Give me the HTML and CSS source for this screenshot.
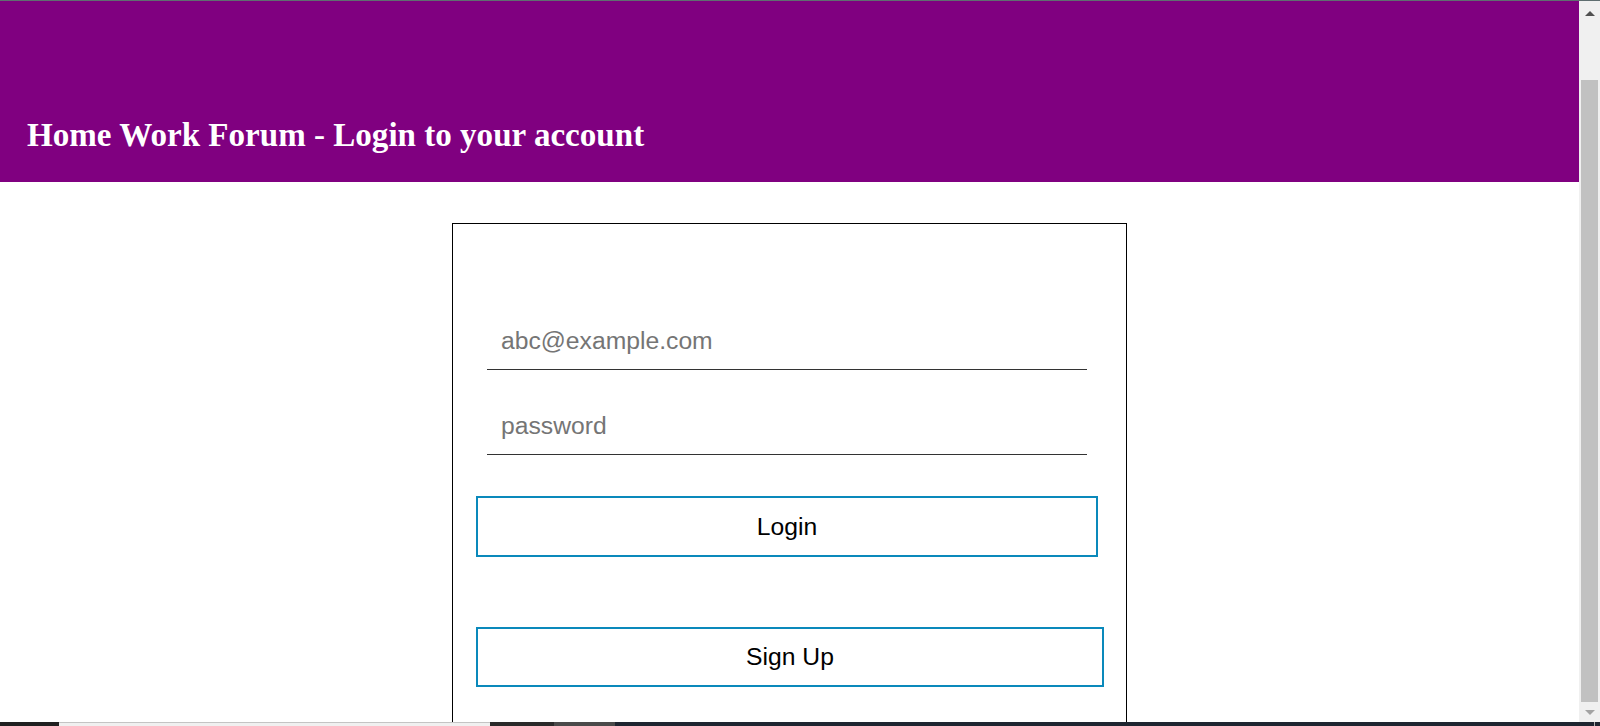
FILE: index.html
```html
<!DOCTYPE html>
<html lang="en">
<head>
<meta charset="utf-8">
<title>Home Work Forum - Login</title>
<link rel="stylesheet" href="styles.css">
</head>
<body>
<div class="screen">
  <div class="viewport">
    <div class="page">
      <header class="site-header">
        <h1 class="site-title">Home Work Forum - Login to your account</h1>
      </header>
      <main class="main">
        <div class="card">
          <form class="login-form">
            <input class="field" type="email" placeholder="abc@example.com">
            <input class="field field-pass" type="password" placeholder="password">
            <button class="btn btn-login" type="button">Login</button>
            <button class="btn btn-signup" type="button">Sign Up</button>
          </form>
        </div>
      </main>
    </div>
    <div class="scrollbar">
      <div class="sb-btn"><span class="arrow-up"></span></div>
      <div class="sb-thumb"></div>
      <div class="sb-btn sb-btn-bottom"><span class="arrow-down"></span></div>
    </div>
  </div>
  <div class="taskbar">
    <span class="tb tb-a"></span>
    <span class="tb tb-b"></span>
    <span class="tb tb-c"></span>
    <span class="tb tb-d"></span>
    <span class="tb tb-e"></span>
    <span class="tb tb-f"></span>
    <span class="tb tb-g"></span>
  </div>
</div>
</body>
</html>
```

FILE: styles.css
```css
* { box-sizing: border-box; }

html, body {
  margin: 0;
  padding: 0;
  background: #ffffff;
}

.screen {
  height: 726px;
  display: flex;
  flex-direction: column;
  border-top: 1px solid #5f6e70;
  overflow: hidden;
}

.viewport {
  flex: 1;
  display: flex;
  min-height: 0;
}

.page {
  flex: 1;
  min-width: 0;
  overflow: hidden;
}

.site-header {
  background: #800080;
  padding: 115px 0 28px 27px;
}

.site-title {
  margin: 0;
  font-family: "Liberation Serif", "Times New Roman", serif;
  font-weight: bold;
  font-size: 33.1px;
  line-height: 38px;
  color: #ffffff;
}

.main {
  padding-top: 41px;
}

.card {
  width: 675px;
  height: 600px;
  margin: 0 auto;
  border: 1px solid #000000;
  border-bottom: none;
  padding-top: 96px;
}

.login-form {
  display: flex;
  flex-direction: column;
  align-items: flex-start;
}

.field {
  width: 600px;
  height: 50px;
  margin-left: 34px;
  padding: 0 14px 8px;
  border: none;
  border-bottom: 1px solid #333333;
  outline: none;
  font-family: "Liberation Sans", Arial, sans-serif;
  font-size: 24.7px;
  color: #222222;
  background: transparent;
}

.field::placeholder {
  color: #757575;
}

.field-pass {
  margin-top: 35px;
}

.btn {
  margin-left: 23px;
  background: #ffffff;
  border: 2px solid #0a89bb;
  font-family: "Liberation Sans", Arial, sans-serif;
  font-size: 24.7px;
  color: #000000;
  padding: 0;
}

.btn-login {
  width: 622px;
  height: 61px;
  margin-top: 41px;
}

.btn-signup {
  width: 628px;
  height: 60px;
  margin-top: 70px;
}

/* fake window scrollbar */
.scrollbar {
  width: 21px;
  flex: none;
  background: #f0f0f0;
  display: flex;
  flex-direction: column;
  align-items: center;
}

.sb-btn {
  height: 21px;
  width: 21px;
  display: flex;
  align-items: center;
  justify-content: center;
  flex: none;
}

.sb-btn-bottom {
  height: 20px;
}

.arrow-up {
  width: 0;
  height: 0;
  border-left: 5px solid transparent;
  border-right: 5px solid transparent;
  border-bottom: 5px solid #505050;
  margin-top: 3px;
}

.arrow-down {
  width: 0;
  height: 0;
  border-left: 5px solid transparent;
  border-right: 5px solid transparent;
  border-top: 5px solid #a3a3a3;
}

.sb-thumb {
  width: 17px;
  height: 622px;
  margin-top: 58px;
  background: #c1c1c1;
  flex: none;
}

/* bottom taskbar strip */
.taskbar {
  height: 4px;
  flex: none;
  display: flex;
}

.tb { display: block; height: 100%; }
.tb-a { width: 59px; background: #202020; }
.tb-b { width: 431px; background: #f0f0f0; border-top: 1px solid #c4c4c4; }
.tb-c { width: 64px; background: #2a2a2a; }
.tb-d { width: 61px; background: #4a4a4a; }
.tb-e { width: 979px; background: #1e2530; }
.tb-f { width: 1px; background: #b0b0b0; }
.tb-g { flex: 1; background: #1e2530; }
```
